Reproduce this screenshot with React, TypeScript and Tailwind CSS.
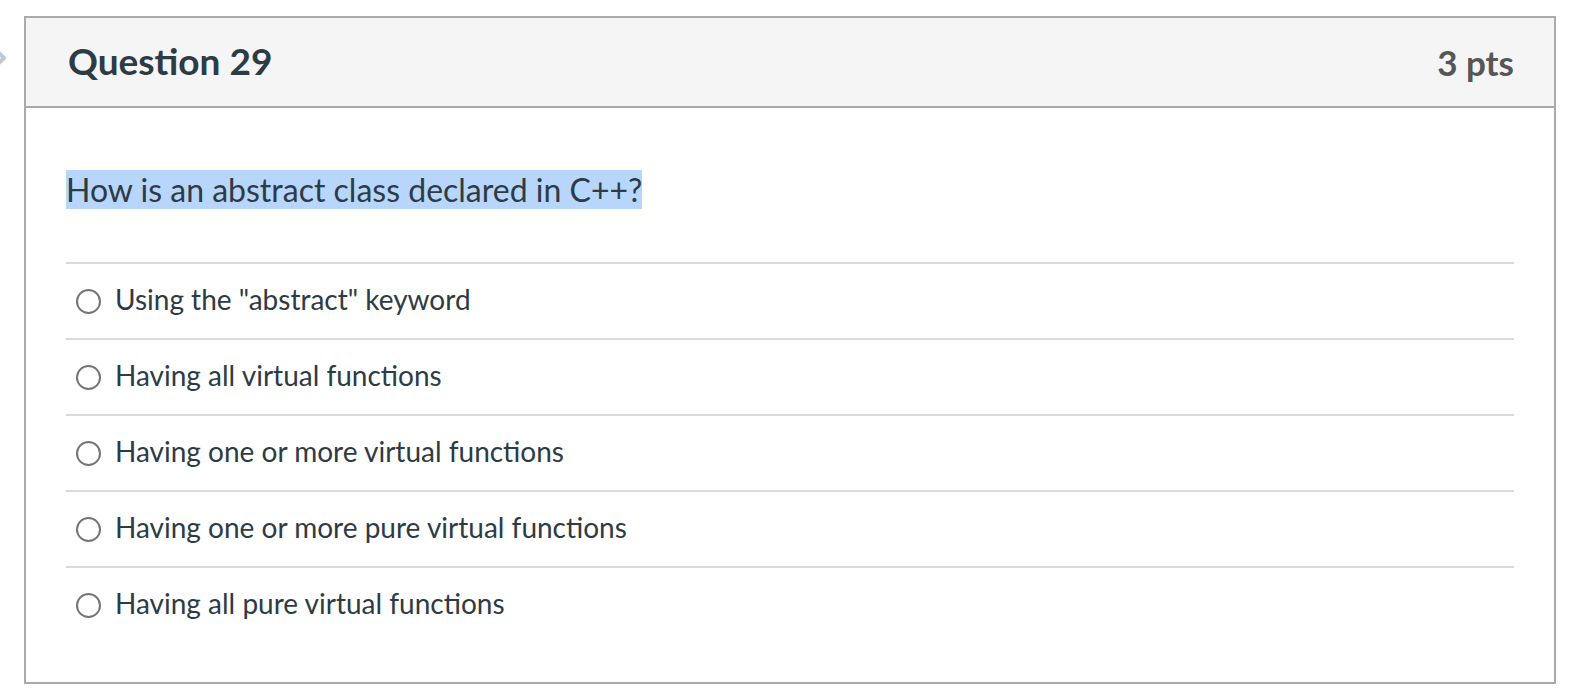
import React from 'react';

const options = [
  'Using the "abstract" keyword',
  'Having all virtual functions',
  'Having one or more virtual functions',
  'Having one or more pure virtual functions',
  'Having all pure virtual functions',
];

const App: React.FC = () => {
  return (
    <div className="relative min-h-screen bg-white pt-[16px] pl-[24px] font-['Lato','Noto_Sans',sans-serif]">
      {/* faded nav chevron peeking in from the left */}
      <svg
        className="absolute left-[-10px] top-[45px]"
        width="18"
        height="26"
        viewBox="0 0 18 26"
        fill="none"
      >
        <path d="M4 3 L14 13 L4 23" stroke="#bccad8" strokeWidth="4" strokeLinejoin="round" />
      </svg>

      <div className="w-[1532px] h-[668px] border-2 border-[#aaaaaa] flex flex-col">
        {/* Header */}
        <div className="h-[90px] bg-[#f5f5f5] border-b-2 border-[#aaaaaa] flex items-center justify-between pl-[42px] pr-[40px]">
          <h2 className="text-[37px] font-bold text-[#2d3b45] leading-none pb-[4px]">Question 29</h2>
          <span className="text-[35px] font-bold text-[#565656] leading-none">3 pts</span>
        </div>

        {/* Body */}
        <div className="px-[40px] pt-[58px]">
          <p className="text-[32px] leading-[47px] text-[#2d3b45]">
            <span className="bg-[#b8d6fb]">How is an abstract class declared in C++?</span>
          </p>

          <div className="mt-[49px]">
            {options.map((opt) => (
              <div
                key={opt}
                className="h-[76px] border-t-2 border-[#dadada] flex items-center pl-[10px] pb-[4px]"
              >
                <span className="w-[25px] h-[25px] rounded-full border-2 border-[#757575] bg-white shrink-0 mt-[4px]" />
                <span className="ml-[14px] text-[28px] text-[#2d3b45] leading-none">{opt}</span>
              </div>
            ))}
          </div>
        </div>
      </div>
    </div>
  );
};

export default App;
